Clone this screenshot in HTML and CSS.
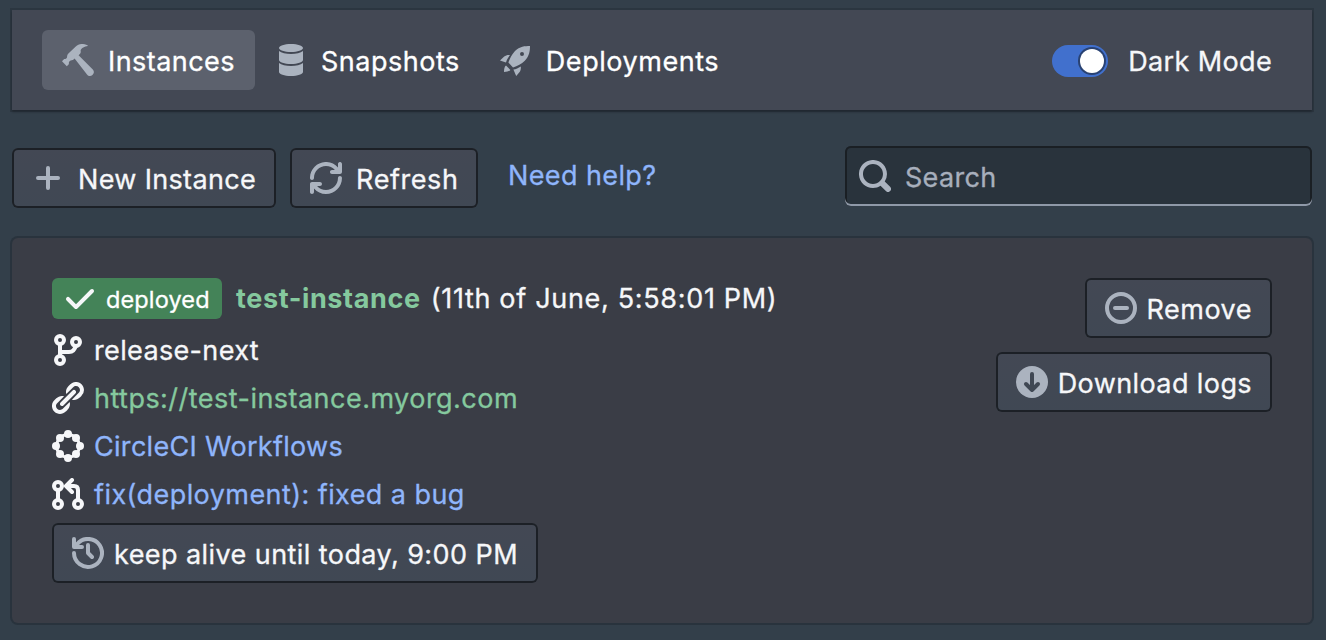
FILE: index.html
```
<!DOCTYPE html>
<html lang="en">
<head>
<meta charset="utf-8">
<title>Instances</title>
<link rel="stylesheet" href="styles.css">
</head>
<body>
<nav class="navbar">
  <div class="tabs">
    <a class="tab tab-active"><svg class="icon" viewBox="0 0 16 16"><path d="M12.900.7C11.800.1 10.800 0 9.700 0 8.600 0 7.700.5 6.900 1.200L3.200 4.700C2.500 5.400 2.600 6 2.500 6.700 2.100 7.300 1.500 7.700 1.100 7.500L0 8.600 2.400 11.100 3.500 10C3.300 9.500 3.400 8.900 3.900 8.500 4.500 8.100 5.200 8.400 5.800 7.800L6.300 7.300 12.500 15.200C13.200 16.100 14.400 16.200 15.200 15.500 16.100 14.700 16.200 13.500 15.400 12.700L8.300 5.600C9.300 4.800 9.500 4.200 9.300 3.300 9.700 1.900 11.300 1.200 12.900 1Z"/></svg><span class="t-instances">Instances</span></a>
    <a class="tab"><svg class="icon" viewBox="0 0 16 16"><path d="M8 4c3.310 0 6-.9 6-2s-2.690-2-6-2C4.680 0 2 .9 2 2s2.680 2 6 2zm-6-.48V8c0 1.100 2.690 2 6 2s6-.9 6-2V3.520C12.780 4.400 10.560 5 8 5s-4.780-.6-6-1.480zm0 6V14c0 1.100 2.690 2 6 2s6-.9 6-2V9.520C12.780 10.400 10.560 11 8 11s-4.780-.6-6-1.480z"/></svg><span class="t-snapshots">Snapshots</span></a>
    <a class="tab"><svg class="icon" viewBox="0 0 16 16"><path fill-rule="evenodd" d="M15 1C12.500 1 9.800 1.200 7.500 3.500 5.900 5.200 4.900 7.200 4.200 9.300L6.500 11.700C8.700 11 10.800 10 12.400 8.400 14.700 6.100 15 3.400 15 1ZM11 4A1 1 0 1 0 11 6 1 1 0 1 0 11 4Z"/><path d="M5 5.500C3.800 5.400 2.800 5.600 2.100 6.300L0 8.300 3 9.200C3.400 7.900 4 6.800 5 5.500ZM6.700 12.800L8.100 16 9.600 14.300C10.400 13.500 10.500 12.400 10.400 11.200 9.200 12 8 12.500 6.700 12.800ZM3 10.700C2.200 11.300 2 12.500 2 14 3.400 14 4.400 13.800 5.200 13Z"/></svg><span class="t-deployments">Deployments</span></a>
  </div>
  <label class="mode"><span class="switch"><span class="knob"></span></span><span class="t-dark">Dark Mode</span></label>
</nav>
<div class="toolbar">
  <button class="button"><svg class="icon" viewBox="0 0 16 16"><path d="M8 3V13M3 8H13" class="line"/></svg><span class="t-new">New Instance</span></button>
  <button class="button"><svg class="icon" viewBox="0 0 16 16"><path d="M14.990 6.990c-.55 0-1 .45-1 1 0 3.310-2.690 6-6 6-1.770 0-3.360-.78-4.460-2h1.460c.55 0 1-.45 1-1s-.45-1-1-1h-4c-.55 0-1 .45-1 1v4c0 .55.45 1 1 1s1-.45 1-1v-1.740a7.950 7.950 0 0 0 6 2.740c4.420 0 8-3.580 8-8 0-.55-.45-1-1-1zm0-7c-.55 0-1 .45-1 1v1.740a7.950 7.950 0 0 0-6-2.740c-4.420 0-8 3.580-8 8 0 .55.45 1 1 1s1-.45 1-1c0-3.310 2.690-6 6-6 1.770 0 3.360.78 4.460 2h-1.460c-.55 0-1 .45-1 1s.45 1 1 1h4c.55 0 1-.45 1-1v-4c0-.55-.45-1-1-1z"/></svg><span class="t-refresh">Refresh</span></button>
  <a class="help"><span class="t-help">Need help?</span></a>
  <div class="search"><svg class="icon" viewBox="0 0 16 16"><path d="M15.550 13.430l-2.670-2.680a6.940 6.940 0 0 0 1.110-3.760c0-3.870-3.130-7-7-7s-7 3.130-7 7 3.130 7 7 7c1.390 0 2.680-.42 3.760-1.110l2.680 2.670a1.498 1.498 0 1 0 2.120-2.120zm-8.560-1.440c-2.760 0-5-2.240-5-5s2.240-5 5-5 5 2.240 5 5-2.240 5-5 5z"/></svg><span class="t-search">Search</span></div>
</div>
<main class="card">
  <div class="details">
    <div class="row heading"><span class="tag"><svg class="icon" viewBox="0 0 16 16"><path d="M14 3c-.28 0-.53.11-.71.29L6 10.590l-3.290-3.300a1.003 1.003 0 0 0-1.420 1.420l4 4c.18.18.43.29.71.29s.53-.11.71-.29l8-8A1.003 1.003 0 0 0 14 3z"/></svg><span class="t-deployed">deployed</span></span><strong class="name t-name">test-instance</strong><span class="t-date">(11th of June, 5:58:01 PM)</span></div>
    <div class="row"><svg class="icon" viewBox="0 0 16 16"><g class="line"><circle cx="4" cy="3" r="2"/><circle cx="12" cy="4" r="2"/><circle cx="4" cy="13" r="2"/><path d="M4 5V11M4 9H8.500C10.500 9 11 8 12 6"/></g></svg><span class="t-branch">release-next</span></div>
    <div class="row"><svg class="icon" viewBox="0 0 16 16"><path d="M4.990 11.990c.28 0 .53-.11.71-.29l6-6a1.003 1.003 0 0 0-1.420-1.420l-6 6a1.003 1.003 0 0 0 .71 1.710zm3.850-2.020L6.400 12.410l-1 1-.01-.01c-.36.36-.85.6-1.400.6-1.100 0-2-.9-2-2 0-.55.24-1.040.6-1.400l-.01-.01 1-1 2.440-2.440c-.33-.1-.67-.16-1.030-.16-1.100 0-2.090.46-2.810 1.190l-.02-.02-1 1 .02.02c-.73.72-1.190 1.710-1.190 2.810 0 2.210 1.790 4 4 4 1.100 0 2.090-.46 2.810-1.190l.02.02 1-1-.02-.02c.73-.72 1.190-1.710 1.190-2.810 0-.35-.06-.69-.15-1.020zm7.150-5.980c0-2.210-1.790-4-4-4-1.100 0-2.090.46-2.810 1.190l-.02-.02-1 1 .02.02c-.72.72-1.190 1.710-1.190 2.810 0 .35.06.69.15 1.020l2.440-2.440 1-1 .01.01c.36-.36.85-.6 1.400-.6 1.100 0 2 .9 2 2 0 .55-.24 1.040-.6 1.400l.01.01-1 1-2.430 2.450c.33.09.67.15 1.020.15 1.100 0 2.090-.46 2.810-1.190l.02.02 1-1-.02-.02a3.920 3.920 0 0 0 1.190-2.810z"/></svg><a class="green t-url">https://test-instance.myorg.com</a></div>
    <div class="row"><svg class="icon" viewBox="0 0 16 16"><circle cx="8" cy="8" r="5.700" class="ring"/><circle cx="8" cy="2" r="2"/><circle cx="12" cy="4" r="2"/><circle cx="14" cy="8" r="2"/><circle cx="12" cy="12" r="2"/><circle cx="8" cy="14" r="2"/><circle cx="4" cy="12" r="2"/><circle cx="2" cy="8" r="2"/><circle cx="4" cy="4" r="2"/></svg><a class="blue t-ci">CircleCI Workflows</a></div>
    <div class="row"><svg class="icon" viewBox="0 0 16 16"><g class="line"><circle cx="3" cy="4" r="2"/><circle cx="3" cy="13" r="2"/><circle cx="13" cy="13" r="2"/><path d="M3 6V11M13 11V6C13 4.700 12.300 4 11 4H7.400M10 1L7 4 10 7"/></g></svg><a class="blue t-fix">fix(deployment): fixed a bug</a></div>
    <button class="button keep"><svg class="icon" viewBox="0 0 16 16"><path class="line" d="M1 8A7 7 0 1 0 2.600 3.500M1 1V5H5M8 4V8L10 10"/></svg><span class="t-keep">keep alive until today, 9:00 PM</span></button>
  </div>
  <div class="actions">
    <button class="button"><svg class="icon" viewBox="0 0 16 16"><g class="line"><circle cx="8" cy="8" r="7"/><path d="M5 8H11"/></g></svg><span class="t-remove">Remove</span></button>
    <button class="button"><svg class="icon" viewBox="0 0 16 16"><circle cx="8" cy="8" r="8"/><path class="line cut" d="M8 4V12M5 9L8 12 11 9"/></svg><span class="t-logs">Download logs</span></button>
  </div>
</main>
</body>
</html>
```
FILE: styles.css
```
* { box-sizing: border-box; }
body {
  margin: 0;
  height: 640px;
  padding: 10px 14px 0 12px;
  overflow: hidden;
  background: #333f4a;
  color: #f6f7f9;
  font: 27px/36px Inter, "Liberation Sans", sans-serif;
  -webkit-text-stroke: .3px currentColor;
  white-space: nowrap;
}
.icon { width: 32px; height: 32px; flex: none; fill: #abb3bf; color: #abb3bf; display: block; }
.line { fill: none; stroke: currentColor; stroke-width: 2; stroke-linecap: round; stroke-linejoin: round; }
.ring { fill: none; stroke: currentColor; stroke-width: 1.5; }
.cut { stroke: #404854; }
.navbar {
  height: 100px;
  padding: 0 40px 0 30px;
  display: flex;
  align-items: center;
  justify-content: space-between;
  background: #434854;
  box-shadow: 0 0 0 2px rgba(17,20,24,.2), 0 2px 2px rgba(17,20,24,.4);
}
.tabs, .tab, .mode { display: flex; align-items: center; }
.tab { height: 60px; padding: 0 20px; gap: 14px; border-radius: 6px; color: #fff; }
.tab > span, .mode > span:last-child { padding-top: 3px; }
.tab-active { background: #5c616d; }
.mode { gap: 20px; }
.switch { width: 56px; height: 32px; margin-top: 2px; padding: 4px; border-radius: 16px; background: #4170cd; display: flex; justify-content: flex-end; }
.knob { width: 24px; height: 24px; border-radius: 50%; background: #fff; box-shadow: 0 0 0 2px rgba(17,20,24,.5); }
.toolbar { display: flex; margin-top: 36px; height: 62px; align-items: flex-end; }
.button {
  height: 60px;
  margin: 0;
  padding: 0 20px;
  border: 0;
  border-radius: 6px;
  display: flex;
  align-items: center;
  gap: 14px;
  color: #f6f7f9;
  font: inherit;
  background: linear-gradient(#434854, #404854);
  box-shadow: inset 0 0 0 2px #1c2026;
}
.button > span { padding-top: 4px; }
.toolbar .button { margin-right: 14px; }
.help { color: #8fb5fb; align-self: center; margin: 0 0 3px 15.5px; }
.search {
  margin-left: auto;
  align-self: flex-start;
  width: 467px;
  height: 60px;
  padding: 0 14px;
  display: flex;
  align-items: center;
  gap: 14px;
  border-radius: 6px;
  color: #a7afbc;
  background: #29333c;
  box-shadow: inset 0 -2px 0 #8f99a8, inset 0 0 0 2px #1a1f24;
}
.search > span { padding-top: 3px; }
.card {
  margin-top: 30px;
  height: 385px;
  padding: 40px;
  display: flex;
  justify-content: space-between;
  border-radius: 6px;
  background: #3a3d46;
  box-shadow: 0 0 0 2px #29333d;
}
.row { height: 48px; display: flex; align-items: center; gap: 10px; }
.row > .icon + * { padding-top: 2px; }
.row .icon { fill: #f6f7f9; color: #f6f7f9; }
.heading { height: 41px; gap: 0; margin-bottom: 7px; }
.tag { height: 41px; width: 170px; padding: 0 12px; display: flex; align-items: center; gap: 10px; border-radius: 6px; background: #448358; color: #fff; font-size: 23.5px; margin-right: 14px; }
.tag > span { padding-top: 2px; }
.name { color: #85c99e; font-weight: 700; margin-right: 10px; -webkit-text-stroke: 0; }
.green { color: #85c99e; }
.blue { color: #8fb5fb; }
.keep { margin-top: 5px; gap: 10px; }
.actions { display: flex; flex-direction: column; align-items: flex-end; gap: 14px; }
.actions .button { gap: 10px; }

/* Tracking per label */
.t-instances { letter-spacing: .44px; }
.t-snapshots { letter-spacing: .52px; }
.t-deployments { letter-spacing: .55px; }
.t-dark { letter-spacing: .36px; }
.t-new { letter-spacing: .34px; }
.t-refresh { letter-spacing: .57px; }
.t-help { letter-spacing: .4px; }
.t-search { letter-spacing: .3px; }
.t-deployed { letter-spacing: .13px; }
.t-name { letter-spacing: .62px; }
.t-date { letter-spacing: .68px; }
.t-branch { letter-spacing: .35px; }
.t-url { letter-spacing: .47px; }
.t-ci { letter-spacing: .3px; }
.t-fix { letter-spacing: .43px; }
.t-keep { letter-spacing: .43px; }
.t-remove { letter-spacing: .5px; }
.t-logs { letter-spacing: .4px; }
```
